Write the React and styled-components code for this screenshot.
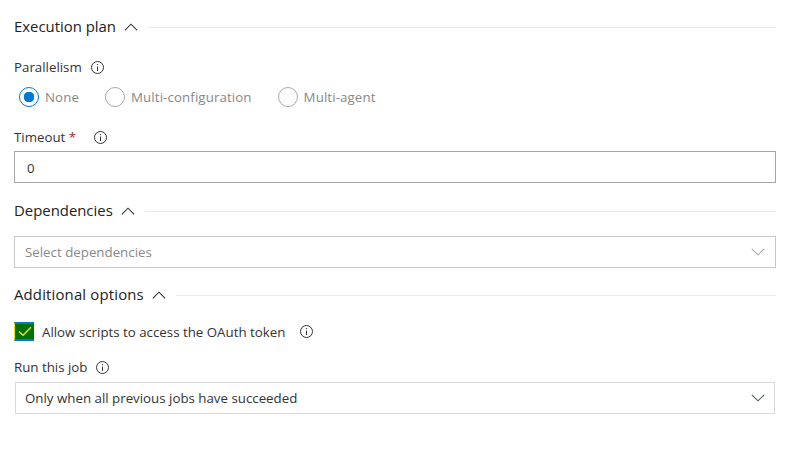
import React from "react";
import styled, { createGlobalStyle } from "styled-components";

const GlobalStyle = createGlobalStyle`
  html, body {
    margin: 0;
    padding: 0;
    background: #fff;
  }
  body {
    font-family: "Open Sans", "Noto Sans", "Liberation Sans", sans-serif;
    color: #333;
  }
`;

function InfoIcon({ size = 15, color = "#333" }) {
  return (
    <svg width={size} height={size} viewBox="0 0 15 15" fill="none">
      <circle cx="7.5" cy="7.5" r="6" stroke={color} strokeWidth="1" />
      <path d="M7.5 6.5V11" stroke={color} strokeWidth="1" />
      <circle cx="7.5" cy="4.6" r="0.7" fill={color} />
    </svg>
  );
}

function ChevronUp() {
  return (
    <svg width="14" height="8" viewBox="0 0 14 8" fill="none">
      <path d="M0.8 7.3L7 1.2L13.2 7.3" stroke="#333" strokeWidth="1.1" />
    </svg>
  );
}

function ChevronDown({ color }) {
  return (
    <svg width="14" height="8" viewBox="0 0 14 8" fill="none">
      <path d="M0.8 0.8L7 6.8L13.2 0.8" stroke={color} strokeWidth="1.1" />
    </svg>
  );
}

function Section({ title, wide, children }) {
  return (
    <>
      <SectionHead>
        <SectionTitle $wide={wide}>{title}</SectionTitle>
        <ChevronUp />
        <SectionRule />
      </SectionHead>
      {children}
    </>
  );
}

export default function App() {
  return (
    <Page>
      <GlobalStyle />
      <Section title="Execution plan">
        <ParallelLabel>
          Parallelism
          <InfoIcon />
        </ParallelLabel>
        <RadioRow>
          <RadioItem>
            <Radio $checked />
            None
          </RadioItem>
          <RadioItem>
            <Radio />
            Multi-configuration
          </RadioItem>
          <RadioItem>
            <Radio />
            Multi-agent
          </RadioItem>
        </RadioRow>
        <TimeoutLabel>
          <span>
            Timeout <Required>*</Required>
          </span>
          <InfoIcon />
        </TimeoutLabel>
        <TextInput>0</TextInput>
      </Section>
      <DependenciesBlock>
        <Section title="Dependencies">
          <SelectBox $muted>
            Select dependencies
            <ChevronDown color="#a6a6a6" />
          </SelectBox>
        </Section>
      </DependenciesBlock>
      <OptionsBlock>
        <Section title="Additional options" wide>
          <CheckRow>
            <CheckBox>
              <svg width="14" height="11" viewBox="0 0 14 11" fill="none">
                <path d="M1 5.5L5 9.2L13 1.2" stroke="#e4e62c" strokeWidth="1.4" />
              </svg>
            </CheckBox>
            <CheckText>Allow scripts to access the OAuth token</CheckText>
            <InfoIcon />
          </CheckRow>
          <RunLabel>
            Run this job
            <InfoIcon />
          </RunLabel>
          <RunSelect>
            Only when all previous jobs have succeeded
            <ChevronDown color="#4a5a6a" />
          </RunSelect>
        </Section>
      </OptionsBlock>
    </Page>
  );
}

const Page = styled.div`
  width: 797px;
  height: 455px;
  box-sizing: border-box;
  padding: 17px 21px 0 14px;
  overflow: hidden;
`;
const SectionHead = styled.div`
  display: flex;
  align-items: center;
  height: 20px;
  gap: 8px;
`;
const SectionTitle = styled.h3`
  margin: 0;
  padding-bottom: 2px;
  font-size: 14.9px;
  font-weight: 400;
  line-height: 18px;
  letter-spacing: ${(p) => (p.$wide ? "0.17px" : "0")};
  color: #222;
`;
const SectionRule = styled.div`
  flex: 1;
  height: 1px;
  margin-left: 2px;
  background: #eaeaea;
`;
const FieldLabel = styled.div`
  display: flex;
  align-items: center;
  font-size: 13.3px;
  line-height: 18px;
  color: #333;
`;
const ParallelLabel = styled(FieldLabel)`
  margin-top: 21px;
  gap: 8px;
`;
const RadioRow = styled.div`
  display: flex;
  align-items: center;
  height: 22px;
  margin-top: 10px;
  padding-left: 5px;
  gap: 26px;
`;
const RadioItem = styled.label`
  display: flex;
  align-items: center;
  gap: 6px;
  font-size: 13.3px;
  letter-spacing: 0.1px;
  color: #8a8886;
`;
const Radio = styled.span`
  width: 20px;
  height: 20px;
  box-sizing: border-box;
  border-radius: 50%;
  border: 1px solid ${(p) => (p.$checked ? "#0078d4" : "#a8a8a8")};
  background: ${(p) => (p.$checked ? "radial-gradient(circle, #0078d4 0 5px, #fff 5.5px)" : "#fff")};
`;
const TimeoutLabel = styled(FieldLabel)`
  margin-top: 20px;
  gap: 17px;
`;
const Required = styled.span`
  color: #a4262c;
`;
const TextInput = styled.div`
  display: flex;
  align-items: center;
  height: 32px;
  margin-top: 5px;
  padding: 2px 12px 0;
  box-sizing: border-box;
  border: 1px solid #a6a6a6;
  font-size: 13.3px;
  color: #333;
`;
const DependenciesBlock = styled.div`
  margin-top: 18px;
`;
const OptionsBlock = styled.div`
  margin-top: 17px;
`;
const SelectBox = styled.div`
  display: flex;
  align-items: center;
  justify-content: space-between;
  height: 32px;
  margin-top: 15px;
  padding: 0 10px;
  box-sizing: border-box;
  border: 1px solid ${(p) => (p.$muted ? "#c8c8c8" : "#dadada")};
  font-size: 13.3px;
  color: ${(p) => (p.$muted ? "#8a8886" : "#333")};
`;
const RunSelect = styled(SelectBox)`
  margin: 6px 1px 0;
  padding: 0 9px;
`;
const CheckRow = styled.div`
  display: flex;
  align-items: center;
  margin-top: 17px;
  font-size: 13.3px;
  color: #333;
`;
const CheckBox = styled.span`
  display: flex;
  align-items: center;
  justify-content: center;
  width: 20px;
  height: 19px;
  box-sizing: border-box;
  background: #007000;
  border-top: 2px solid #0078d4;
  border-bottom: 2px solid #0078d4;
  border-left: 1px solid #e8e800;
`;
const CheckText = styled.span`
  margin: 0 14px 0 8px;
`;
const RunLabel = styled(FieldLabel)`
  margin-top: 17px;
  gap: 7px;
`;
